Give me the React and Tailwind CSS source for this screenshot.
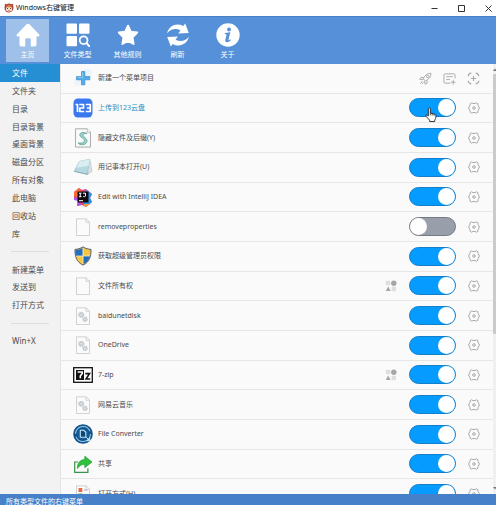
import React, { useState } from "react";

const toolbar = [
  { id: "home", label: "主页" },
  { id: "types", label: "文件类型" },
  { id: "rules", label: "其他规则" },
  { id: "refresh", label: "刷新" },
  { id: "about", label: "关于" },
];

const sidebar = [
  "文件", "文件夹", "目录", "目录背景", "桌面背景", "磁盘分区", "所有对象", "此电脑", "回收站", "库",
  null,
  "新建菜单", "发送到", "打开方式",
  null,
  "Win+X",
];

const items = [
  { name: "上传到123云盘", icon: "cloud", on: true, active: true },
  { name: "隐藏文件及后缀(Y)", icon: "script", on: true },
  { name: "用记事本打开(U)", icon: "notepad", on: true },
  { name: "Edit with IntelliJ IDEA", icon: "idea", on: true },
  { name: "removeproperties", icon: "page", on: false },
  { name: "获取超级管理员权限", icon: "shield", on: true },
  { name: "文件所有权", icon: "page", on: true, group: true },
  { name: "baidunetdisk", icon: "dll", on: true },
  { name: "OneDrive", icon: "dll", on: true },
  { name: "7-zip", icon: "zip", on: true, group: true },
  { name: "网易云音乐", icon: "dll", on: true },
  { name: "File Converter", icon: "converter", on: true },
  { name: "共享", icon: "share", on: true },
  { name: "打开方式(H)", icon: "openwith", on: true },
];

function ToolbarIcon({ id }) {
  const p = { viewBox: "0 0 24 24", className: "size-6", fill: "currentColor", "aria-hidden": true };
  if (id === "home")
    return (
      <svg {...p}>
        <path d="M12 .8c.6 0 1 .2 1.400.5L23 11.200c1 1 .6 2.300-.8 2.300h-1.700v8.300c0 1.100-.7 1.700-1.700 1.700h-4v-6.700c0-1-.5-1.600-1.400-1.600h-2.800c-.9 0-1.400.6-1.400 1.600v6.700h-4c-1 0-1.700-.6-1.700-1.700v-8.300H1.800c-1.400 0-1.800-1.300-.8-2.300l9.600-9.900c.4-.3.8-.5 1.400-.5z" />
      </svg>
    );
  if (id === "types")
    return (
      <svg {...p}>
        <rect x=".5" y=".5" width="10.500" height="10.300" rx="1" />
        <rect x="13" y=".5" width="10.500" height="10.300" rx="1" />
        <rect x=".5" y="13" width="10.500" height="10.300" rx="1" />
        <circle cx="17.600" cy="17.200" r="3.900" fill="none" stroke="currentColor" strokeWidth="1.800" />
        <path d="m20.500 20.200 3 3.300" stroke="currentColor" strokeWidth="2" strokeLinecap="round" />
      </svg>
    );
  if (id === "rules")
    return (
      <svg {...p}>
        <path d="M12 2.700 14.800 8.700l6.400.9-4.700 4.700 1.100 6.600-5.600-3.100-5.600 3.100 1.100-6.600-4.700-4.700 6.400-.9z" stroke="currentColor" strokeWidth="2" strokeLinejoin="round" />
      </svg>
    );
  if (id === "refresh")
    return (
      <svg {...p}>
        <path d="M1.100 10.200C3.100 2.300 10.800-.4 17.300 3.100L19.200.5l3.600 9.500-10.700.5 2.400-3.300C9.600 4.900 5 5.600 1.100 10.200z" />
        <path d="M22.900 13.800c-2 7.900-9.700 10.600-16.200 7.100l-1.900 2.600L1.200 14l10.700-.5-2.400 3.300c4.900 2.300 9.500 1.600 13.400-3z" />
      </svg>
    );
  return (
    <svg {...p}>
      <circle cx="12" cy="12" r="11.700" />
      <g fill="#5590d8">
        <circle cx="13" cy="6.500" r="1.900" />
        <path d="M8.800 10c1.800 0 3.600-.4 5.500-.9l-1.800 7.700c-.2.900.7.600 1.800-.5l.6.700c-2.200 2.600-6.300 3.300-5.600.1l1.200-5.200c.1-.7-.5-.9-1.700-.9z" />
      </g>
    </svg>
  );
}

function ItemIcon({ kind }) {
  const p = { viewBox: "0 0 20 20", className: "size-5", "aria-hidden": true };
  if (kind === "plus")
    return (
      <svg {...p}>
        <circle cx="14" cy="6" r="5.500" fill="#edf5fc" />
        <circle cx="5" cy="14" r="4" fill="#edf5fc" />
        <path d="M8.500 3.600h3.300v5h5v3.200h-5v5H8.500v-5h-5V8.600h5z" fill="#52ade8" stroke="#3b86c8" strokeWidth=".7" strokeLinejoin="round" />
        <path d="M9.500 4.500v5h-5" fill="none" stroke="#8dd0f4" strokeWidth=".9" />
      </svg>
    );
  if (kind === "cloud")
    return (
      <svg {...p}>
        <rect x=".5" y=".5" width="19" height="19" rx="4.500" fill="#3a78ef" />
        <path d="M2.500 6.500h2v7.500M6.300 6.500h4.200v3.500H6.800v3.500h4.400M12.800 6.500h4.500v7h-4.500m1-3.500h3.500" fill="none" stroke="#fff" strokeWidth="1.700" strokeLinejoin="round" />
      </svg>
    );
  if (kind === "idea")
    return (
      <svg {...p}>
        <path d="M1 5 6 1l3 2 4-1 6 5-2 4 2 4-6 5-4-2-5 1 1-5-4-3z" fill="#ef3f72" />
        <path d="m1 11 5-1 2 8-4 1 1-5-4-1z" fill="#a457e8" />
        <path d="m12 2 7 5-2 4 2 4-6 5-3-2 4-12z" fill="#2994e8" />
        <path d="m1 5 5-4 2 3-3 6-4-1z" fill="#f76b34" />
        <path d="M12 17h5l-4 3-3-2z" fill="#f99b38" />
        <path d="M4.500 4.500h11v11h-11z" fill="#120b12" />
        <path d="M6 6.200h2.500M7.250 6.200v3.500M6 9.700h2.500M10 6.200h2.500v2.700c0 .8-1.500 1-2.300.5M6 13.700h4" stroke="#fff" strokeWidth="1" fill="none" />
      </svg>
    );
  if (kind === "shield")
    return (
      <svg {...p}>
        <path d="M10 .9c2.700 1.700 5.200 2.400 8 2.500.1 7.200-1.400 12.500-8 15.700C3.400 15.900 1.900 10.600 2 3.400 4.800 3.300 7.300 2.600 10 .9z" fill="#f5c543" stroke="#555f6b" strokeWidth="1" />
        <path d="M9.800 2v8H2.900a20 20 0 0 1-.3-6C5.200 3.900 7.500 3.300 9.800 2zM10.200 10h6.900c-.9 3.700-3 6.400-6.900 8.300z" fill="#246fbd" />
        <path d="M10 2v16M3 10h14" stroke="#fff6d5" strokeWidth=".7" />
      </svg>
    );
  if (kind === "zip")
    return (
      <svg {...p}>
        <rect x=".7" y="2.700" width="18.600" height="14.600" fill="#fff" stroke="#111" strokeWidth="1.300" />
        <path d="M3 5h8v10H3z" fill="#111" />
        <path d="M4.600 7h4.600v1.500L7.300 11v2.200" stroke="#fff" strokeWidth="1.600" fill="none" />
        <path d="M12.300 8.600h4.200L13 14h4.200" stroke="#111" strokeWidth="1.600" fill="none" />
      </svg>
    );
  if (kind === "converter")
    return (
      <svg {...p}>
        <circle cx="10" cy="10" r="9.800" fill="#12518a" />
        <circle cx="10" cy="10" r="7.500" fill="none" stroke="#8fcdf0" strokeWidth="1.100" strokeDasharray="20.500 3.060" />
        <circle cx="10" cy="10" r="5.800" fill="#155d92" />
        <path d="M7.300 6.300h3.400L12.800 8.300V13.300H7.300z" fill="#0d4674" stroke="#c5e8fa" strokeWidth="1.100" />
        <path d="m13.300 13.300 3.400 3.400m0-3.400v3.400h-3" stroke="#d6effc" strokeWidth="1" fill="none" />
      </svg>
    );
  if (kind === "share")
    return (
      <svg {...p}>
        <path d="M5 8H1.700v10.300h13.200v-4" fill="none" stroke="#359449" strokeWidth="1.200" />
        <path d="M11.800 2.200 19 8l-7.200 5.700v-3.400c-3 0-5.200 1.200-7.400 4.200C4.100 9.500 7 5.500 11.800 5.500z" fill="#2fc139" stroke="#209a38" strokeWidth=".7" strokeLinejoin="round" />
      </svg>
    );
  if (kind === "notepad")
    return (
      <svg {...p}>
        <path d="m14.500 3.500 2.500-.2L19 14.500l-5 2.500z" fill="#dde3e5" stroke="#b0babe" strokeWidth=".6" />
        <path d="M6.300 4.300 16.800 2.300 14.300 17.300 1.200 14.300z" fill="#b4d9e1" stroke="#93b8c3" strokeWidth=".6" />
        <path d="M6.300 4.300 16.800 2.300l-1.100 6.500-12.200 2z" fill="#d9edf0" />
        <path d="m1.200 14.300 13.100 3 1.400-.8" stroke="#7898a2" strokeWidth=".7" fill="none" />
      </svg>
    );
  return (
    <svg {...p}>
      {kind === "script" ? (
        <>
          <path d="M2.500.8h11.800l3.200 3.300v15h-15z" fill="#f8f9f9" stroke="#a0a5a4" strokeWidth=".9" />
          <path d="M14.200.8v3.500h3.300" fill="#fff" stroke="#a0a5a4" strokeWidth=".7" />
          <path d="M14 5.500C8 2.500 5 6.500 8 9c3 2 5 3 2 6H5c1.500 2.500 8 2.500 9-1.500.8-3.200-4.500-4.500-4-6.500.3-1.200 2-1.500 4-1.500z" fill="#9ad3c9" stroke="#609e98" strokeWidth=".8" />
        </>
      ) : (
        <>
          <path d="M3.500 1.800h9.700l3.300 3.400v13.300h-13z" fill="#fbfbfb" stroke="#c6c8ca" strokeWidth=".8" />
          <path d="M13 1.800v3.500h3.500" fill="none" stroke="#c6c8ca" strokeWidth=".8" />
        </>
      )}
      {kind === "dll" && (
        <g>
          <g fill="#c9ced3" stroke="#c9ced3" strokeDasharray="1.300 .7" strokeWidth="1.300">
            <circle cx="8.200" cy="8.800" r="2.500" />
            <circle cx="12" cy="13.300" r="2.200" />
          </g>
          <circle cx="8.200" cy="8.800" r=".8" fill="#eef0f2" />
          <circle cx="12" cy="13.300" r=".7" fill="#eef0f2" />
        </g>
      )}
      {kind === "openwith" && (
        <>
          <path d="M5.500 4h3.800v4H5.500z" fill="#ef6545" />
          <path d="M5.500 9.500h3.800v4H5.500z" fill="#46ad4b" />
          <path d="M5.500 14.500h3.800v3H5.500z" fill="#4287d5" />
          <path d="M11 6h3.500M11 11h3.500M11 16h3.500" stroke="#aaa" />
        </>
      )}
    </svg>
  );
}

function Gear() {
  return (
    <svg viewBox="0 0 12 12" className="size-3" fill="none" stroke="#a8a8a8" strokeWidth="1" strokeLinejoin="round" aria-hidden="true">
      <path d="M3.600.8 4.900 1.500H7.100L8.400.8l1.500.9.100 1.700 1.500 2.600L10 8.600l-.1 1.700-1.500.9-1.300-.7H4.900l-1.300.7-1.500-.9L2 8.600.5 6 2 3.400l.1-1.700z" />
      <circle cx="6" cy="6" r="1.300" />
    </svg>
  );
}

function GroupMark() {
  return (
    <svg viewBox="0 0 12 12" className="size-3" aria-hidden="true">
      <rect x=".8" y=".8" width="4.400" height="4.400" fill="#dedede" />
      <circle cx="8.800" cy="3.200" r="2.700" fill="#a6a6a6" />
      <path d="M3.200 6.600 5.700 11H.7z" fill="#a6a6a6" />
      <rect x="6.600" y="6.800" width="4.400" height="4.400" fill="#dedede" />
    </svg>
  );
}

function HandCursor() {
  return (
    <svg viewBox="0 0 12 16" className="pointer-events-none absolute top-[9px] left-4 h-4 w-3" aria-hidden="true">
      <path d="M3.300 1.700c0-1.300 2-1.300 2 0v4.400l4.500 1.100c.8.300 1.200.8 1.200 1.600 0 2-.6 3.200-1.300 4.300v1.400H4.600v-1.300L1.300 9.500c-.9-1.300.4-2 1.200-1.200l.8.800z" fill="#fff" stroke="#222" strokeWidth=".9" strokeLinejoin="round" />
      <path d="M5.300 6v2.500M7.200 6.700v1.900M9.100 7.200v1.600" stroke="#222" strokeWidth=".7" />
    </svg>
  );
}

function Toggle({ label, initial, hand }) {
  const [on, setOn] = useState(initial);
  return (
    <label className="relative block h-[19px] w-[47px] shrink-0">
      <input type="checkbox" aria-label={label} checked={on} onChange={() => setOn(!on)} className="peer absolute inset-0 m-0 size-full appearance-none rounded-full border border-[#757b87] bg-[#989fab] checked:border-[#147fc6] checked:bg-[#059bff]" />
      <span className="pointer-events-none absolute top-px left-px size-[17px] rounded-full bg-white peer-checked:left-[29px]" />
      {hand && <HandCursor />}
    </label>
  );
}

function Row({ children }) {
  return <li className="flex min-h-0 items-center border-b border-[#e6e6e6] pr-[13px] pl-3">{children}</li>;
}

export default function App() {
  return (
    <div className="flex h-screen flex-col overflow-hidden bg-[#fafafa] font-['Noto_Sans','Noto_Sans_CJK_SC',sans-serif] text-[7px] leading-3 text-[#4a4a4a]">
      <header className="flex h-4 shrink-0 items-center justify-between bg-white px-1">
        <div className="flex items-center gap-[2px] text-[#111]">
          <svg viewBox="0 0 10 10" className="size-[10px]" aria-hidden="true">
            <path d="M1 2 .7.8l2 .4A5 5 0 0 1 7.500 1.200L9.300.8 9 2.300C10.500 6 8.500 9.500 5 9.500S-.5 6 1 2z" fill="#a94436" />
            <path d="M2 4.500 5 3.700l3 .8v3L5 9 2 7.500z" fill="#f5dfcf" />
            <path d="M1.500 3.300 5 1.500l3.500 1.800L6 4.200H4z" fill="#d87a45" />
            <path d="M3.500 5v1M6.500 5v1" stroke="#542a22" strokeWidth=".9" />
            <path d="M4 7.800h2" stroke="#d95e45" />
          </svg>
          <h1>Windows右键管理</h1>
        </div>
        <div className="flex items-center gap-5 text-[#333]">
          <button type="button" aria-label="最小化">
            <svg viewBox="0 0 7 7" className="size-[7px]"><path d="M.5 3.500h6" stroke="currentColor" /></svg>
          </button>
          <button type="button" aria-label="最大化">
            <svg viewBox="0 0 7 7" className="size-[7px]"><path d="M.5.500h6v6h-6z" fill="none" stroke="currentColor" /></svg>
          </button>
          <button type="button" aria-label="关闭">
            <svg viewBox="0 0 7 7" className="size-[7px]"><path d="m.5.500 6 6m0-6-6 6" stroke="currentColor" /></svg>
          </button>
        </div>
      </header>

      <nav className="flex h-12 shrink-0 items-center gap-[7px] border-t border-[#4a80c4] bg-[#5590d8] pl-[6px] text-white">
        {toolbar.map((t, i) => (
          <button key={t.id} type="button" className={"flex h-[43px] w-[43px] flex-col items-center gap-[2px] pt-1 whitespace-nowrap " + (i === 0 ? "bg-[#9fc0e9]" : "")}>
            <ToolbarIcon id={t.id} />
            <span>{t.label}</span>
          </button>
        ))}
      </nav>

      <div className="flex min-h-0 flex-1 overflow-hidden">
        <nav className="w-[61px] shrink-0 border-r border-[#e4e4e4] bg-[#f2f2f2]">
          <ul className="grid h-[286px] auto-rows-fr text-[8px]">
            {sidebar.map((s, i) => (
              <li key={i} className="flex min-h-0 items-center">
                {s ? (
                  <button type="button" className={"h-full w-full pl-3 text-left " + (i === 0 ? "bg-[#268ed2] text-white" : "")}>{s}</button>
                ) : (
                  <hr className="mx-[11px] w-full border-[#dddddd]" />
                )}
              </li>
            ))}
          </ul>
        </nav>

        <main className="min-w-0 flex-1 overflow-hidden">
          <ul className="grid h-[445px] auto-rows-fr">
            <Row>
              <ItemIcon kind="plus" />
              <span className="ml-[5px] flex-1">新建一个菜单项目</span>
              <div className="flex gap-[11px] text-[#a8a8a8]">
                <button type="button" aria-label="快速启动">
                  <svg viewBox="0 0 14 14" className="size-[13px]" fill="none" stroke="currentColor" strokeWidth="1" strokeLinejoin="round">
                    <path d="M4.500 7.500C6 4 8.500 1.500 12.800 1.200c.2 4.300-2.300 6.800-5.800 8.300zM5.200 6l-3-.3L.8 7.900l3.500.2M8.500 9l.3 3-2.300 1.300L6 9.800M3.800 9.500 1.500 12.700M5 11l-1.500 1.700" />
                    <circle cx="9.300" cy="4.800" r="1.300" />
                  </svg>
                </button>
                <button type="button" aria-label="添加菜单">
                  <svg viewBox="0 0 14 14" className="size-[13px]" fill="none" stroke="currentColor" strokeWidth="1">
                    <path d="M8 12H2.200C1.500 12 1 11.500 1 10.800V3.200C1 2.500 1.500 2 2.200 2h9.600c.7 0 1.200.5 1.200 1.200V7M3.500 5h7M3.500 8h4M11 8.500v5M8.500 11h5" />
                  </svg>
                </button>
                <button type="button" aria-label="添加项目">
                  <svg viewBox="0 0 14 14" className="size-[13px]" fill="none" stroke="currentColor" strokeWidth="1.200">
                    <path d="M1.200 4.600C1.400 2.700 2.700 1.400 4.600 1.200M9.400 1.200c1.900.2 3.200 1.500 3.400 3.400M12.800 9.400c-.2 1.900-1.500 3.200-3.400 3.400M4.600 12.800c-1.900-.2-3.200-1.500-3.400-3.400M7 4.200v5.600M4.200 7h5.600" />
                  </svg>
                </button>
              </div>
            </Row>
            {items.map((it) => (
              <Row key={it.name}>
                <ItemIcon kind={it.icon} />
                <span className={"ml-[5px] flex-1 " + (it.active ? "text-[#258fc4]" : "")}>{it.name}</span>
                {it.group && <span className="mr-3"><GroupMark /></span>}
                <Toggle label={it.name} initial={it.on} hand={it.active} />
                <button type="button" aria-label={it.name + " 设置"} className="ml-3"><Gear /></button>
              </Row>
            ))}
          </ul>
        </main>

        <div className="flex w-[3px] shrink-0 flex-col items-center bg-[#f0f0f0]" aria-hidden="true">
          <svg viewBox="0 0 3 10" className="h-[10px] w-[3px] shrink-0"><path d="M0 7 2 4.500 3 5.500V7z" fill="#777" /></svg>
          <div className="h-[260px] w-full shrink-0 bg-[#cbcbcb]" />
          <div className="flex-1" />
          <svg viewBox="0 0 3 10" className="h-[10px] w-[3px] shrink-0"><path d="M0 3h3v1L2 5.500z" fill="#777" /></svg>
        </div>
      </div>

      <footer className="h-[11px] shrink-0 overflow-hidden bg-[#4580c8] pt-[2px] pl-[6px] text-white">所有类型文件的右键菜单</footer>
    </div>
  );
}
